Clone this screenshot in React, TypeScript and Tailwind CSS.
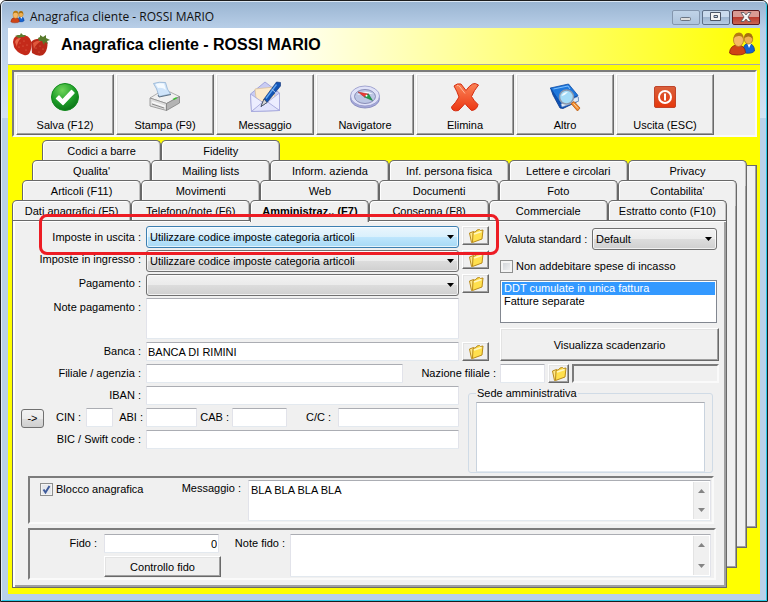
import React, { useState } from 'react';

const tabRows = [
    { className: 'ml-[30px] -mr-[30px]', tabs: ['Codici a barre', 'Fidelity'] },
    { className: 'ml-[20px] -mr-[20px]', tabs: ["Qualita'", 'Mailing lists', 'Inform. azienda', 'Inf. persona fisica', 'Lettere e circolari', 'Privacy'] },
    { className: 'ml-[10px] -mr-[10px]', tabs: ['Articoli (F11)', 'Movimenti', 'Web', 'Documenti', 'Foto', "Contabilita'"] },
];

const frontTabs = ['Dati anagrafici (F5)', 'Telefono/note (F6)', 'Amministraz.. (F7)', 'Consegna (F8)', 'Commerciale', 'Estratto conto (F10)'];

const raised = 'bg-[#f0f0f0] border border-t-white border-l-white border-r-[#696969] border-b-[#696969] shadow-[inset_-1px_-1px_0_#a0a0a0,inset_1px_1px_0_#e3e3e3]';
const sunken = 'border-2 border-t-[#7c7c7c] border-l-[#7c7c7c] border-r-[#fafafa] border-b-[#fafafa]';
const field = 'bg-white border border-t-[#abadb3] border-x-[#e2e3ea] border-b-[#e3e9ef] rounded-[1px] outline-none';

/* ---------- icons ---------- */

const SaveIcon = () => (
    <svg width="32" height="32" viewBox="0 0 32 32">
        <defs>
            <radialGradient id="okGreen" cx="0.4" cy="0.25" r="0.8">
                <stop offset="0" stopColor="#6fd45a" />
                <stop offset="0.55" stopColor="#1fa02a" />
                <stop offset="1" stopColor="#0a6e16" />
            </radialGradient>
        </defs>
        <circle cx="16" cy="16" r="13.5" fill="url(#okGreen)" stroke="#118a1c" />
        <path d="M7.500 17.500 L10 15 L13.500 19 L22.500 9.500 L25 12 L14 23.500 Z" fill="#fff" stroke="#fff" strokeWidth="1.4" strokeLinejoin="round" />
    </svg>
);

const PrintIcon = () => (
    <svg width="32" height="32" viewBox="0 0 32 32">
        <path d="M1 17 L10 11.5 L21 11 L30.5 15.5 L17.5 22.5Z" fill="#f0f0f0" stroke="#9a9a9a" strokeWidth=".8" />
        <path d="M4.500 2.500 Q10 .5 16.500 1.500 Q18 9 21.500 13 L10 15.500 Q8 7 4.500 2.500Z" fill="#cfe4fa" stroke="#8fb0d2" strokeWidth=".8" />
        <path d="M6.500 3 Q10 2 15 2.500 L17 9 Q13 6 9 7Z" fill="#f4faff" />
        <path d="M1 17 L17.500 22.500 L17.500 29.500 L1 25Z" fill="#dedede" stroke="#8a8a8a" strokeWidth=".8" />
        <path d="M17.500 22.500 L30.500 15.500 L30.500 22 L17.500 29.500Z" fill="#b4b4b4" stroke="#808080" strokeWidth=".8" />
        <path d="M3 21 L16 25.500" stroke="#f8f8f8" strokeWidth="1.4" />
        <path d="M3 23 L15 27" stroke="#767676" strokeWidth=".8" />
        <path d="M9 14 L10 16 L22 13.500" stroke="#5e7184" fill="none" />
        <path d="M23.500 18 L27 16.200 L28.500 17 L25 18.900Z" fill="#35c12c" />
    </svg>
);

const MessageIcon = () => (
    <svg width="32" height="32" viewBox="0 0 32 32">
        <path d="M1.500 13 L16 1 L30.500 12 L30.500 29.500 L2.500 30.500Z" fill="#c9ccf3" stroke="#9598d6" strokeWidth=".8" />
        <path d="M6 8 L25 6 L26 18 L16 24 L7 17Z" fill="#fdeacb" stroke="#d9bd94" strokeWidth=".7" />
        <path d="M1.500 13 L14 21.500 L2.500 30.500Z M30.500 12 L18 21.500 L30.500 29.500Z" fill="#ecedff" stroke="#a3a6da" strokeWidth=".8" />
        <path d="M2.500 30.500 L16 19 L30.500 29.500Z" fill="#e2e4fc" stroke="#a3a6da" strokeWidth=".8" />
        <path d="M31.500 1.500 L27.500 1 L15 18 L12 25.500 L18 21.500 L31.500 5Z" fill="#1354b4" stroke="#0b2f74" strokeWidth=".6" />
        <path d="M27.500 3.500 L17 17.500" stroke="#62a8f3" strokeWidth="1.300" />
        <path d="M15 18 L18 21.500 L12 25.500Z" fill="#d9d9d9" stroke="#33363e" strokeWidth=".6" />
        <path d="M22.500 8 L27 12" stroke="#a9c4ea" />
    </svg>
);

const CompassIcon = () => (
    <svg width="32" height="32" viewBox="0 0 32 32">
        <ellipse cx="16" cy="17.500" rx="14.500" ry="9.500" fill="#a6aada" stroke="#7c80b8" strokeWidth=".8" />
        <ellipse cx="16" cy="15" rx="14.500" ry="10" fill="#e0e2f8" stroke="#9194c6" strokeWidth=".8" />
        <ellipse cx="16" cy="15.500" rx="10.500" ry="7" fill="#bcc6e4" stroke="#777ba8" strokeWidth=".8" />
        <path d="M8 14 Q15 8 24 13 Q16 12 8 14Z" fill="#f4f9ff" />
        <path d="M9 11 L19.500 13 L15.500 16Z" fill="#ec3b34" stroke="#a02020" strokeWidth=".5" />
        <path d="M23.500 19.500 L19.500 13 L15.500 16Z" fill="#1fa048" stroke="#0d6530" strokeWidth=".5" />
        <circle cx="17.500" cy="14.800" r="1" fill="#fff" />
    </svg>
);

const DeleteIcon = () => (
    <svg width="32" height="32" viewBox="0 0 32 32">
        <defs>
            <linearGradient id="delRed" x1="0" y1="0" x2="0" y2="1">
                <stop offset="0" stopColor="#fa8457" />
                <stop offset="1" stopColor="#ec3612" />
            </linearGradient>
        </defs>
        <path
            d="M5 5 Q8 2 12 3 L17 9.500 Q20 5 23.500 3 Q26 1.500 29.500 4 Q25 9.500 22.500 15.500 Q25 20 29 23.500 Q28 29 22.500 29.500 Q19 26.500 16 22.500 Q13 26 9.500 29.500 Q3 31 2.500 26 Q7 21.500 10 16 Q8 10 5 5Z"
            fill="url(#delRed)"
            stroke="#d42c10"
            strokeLinejoin="round"
        />
        <path d="M8 4.500 Q9.500 4 11 6 L16 12.500" stroke="#ffb99b" fill="none" />
    </svg>
);

const BookIcon = () => (
    <svg width="32" height="32" viewBox="0 0 32 32">
        <path d="M1.500 7 L4 14 L11 27 L14 27.500 L29.500 20 L29 16Z" fill="#0e51b4" stroke="#0a3a8a" strokeWidth=".8" />
        <path d="M12 23 L29 15.500 L29.500 20 L13 26Z" fill="#dfeaf7" stroke="#7b9cc8" strokeWidth=".6" />
        <path d="M1.500 7 L19.500 3 L29 14.500 L11.500 22Z" fill="#1f78dc" stroke="#0d4ba6" strokeWidth=".8" />
        <path d="M4.500 8 L19 5 L21 8" stroke="#7fc0ff" fill="none" />
        <path d="M22 22.500 L25 20.500 L31 27 L28.500 30Z" fill="#f18a2b" stroke="#b95a12" strokeWidth=".8" />
        <path d="M24.500 22.500 L29 27.500" stroke="#ffd9a6" />
        <circle cx="17.500" cy="16" r="7" fill="#a4dcf8" stroke="#8c98ac" strokeWidth="1.500" />
        <path d="M12.500 15 Q14 11 19 11 Q16 14.500 12.500 15Z" fill="#f2fbff" />
    </svg>
);

const ExitIcon = () => (
    <svg width="32" height="32" viewBox="0 0 32 32">
        <defs>
            <linearGradient id="exitRed" x1="0" y1="0" x2="0" y2="1">
                <stop offset="0" stopColor="#d9613c" />
                <stop offset="1" stopColor="#e6370b" />
            </linearGradient>
        </defs>
        <rect x="5.500" y="5.500" width="21" height="21" rx="1.500" fill="url(#exitRed)" stroke="#c0442a" />
        <circle cx="16" cy="16" r="6" fill="none" stroke="#fff" strokeWidth="2" />
        <rect x="15" y="12.500" width="2" height="7" fill="#fff" />
    </svg>
);

const FolderIcon = () => (
    <svg width="16" height="16" viewBox="0 0 16 16">
        <path d="M1.500 5 L5.500 3.500 L6.500 12.500 L3.500 14.500Z" fill="#ffe98a" stroke="#b98a1a" />
        <path d="M5 4.500 L8 3.500 L9 2 L11.500 1.500 L12.500 2.500 L15 2 L14 11 L4.500 14.500Z" fill="#ffe04e" stroke="#b98a1a" />
        <path d="M6 6 L13.500 3.500" stroke="#fff7c4" strokeWidth="1.400" />
    </svg>
);

const Strawberries = () => (
    <svg width="40" height="26" viewBox="0 0 40 26">
        <path d="M19 10 Q23 6 30 7 Q36 7 35.500 13 Q35 20 31 23 Q26 25 20 21Z" fill="#b82818" />
        <path d="M21 11 Q25 8 29 9 Q24 12 22 17Z" fill="#e0583c" />
        <path d="M26 6 L28 5 L28 3 L31 5 L34 3 L34 6 L38 8 L35 9 L36 12 L33 10 L32 13 L30 9 L27 9Z" fill="#587a2c" />
        <path d="M1 10 Q1 4 8 3 Q17 2 19 9 Q20 16 18 20 Q16 24 12 23 Q4 20 2 15Z" fill="#c42a1a" />
        <path d="M3 10 Q4 6 9 6 Q5 10 5 15Z" fill="#ea6a4c" />
        <path d="M3 4 L6 3 L8 3 L9 1 L11 3 L14 3 L12 5 L9 5 L7 6Z" fill="#5d7c30" />
        <g fill="#e5765c">
            <circle cx="8" cy="11" r=".6" />
            <circle cx="12" cy="9" r=".6" />
            <circle cx="15" cy="13" r=".6" />
            <circle cx="7" cy="15" r=".6" />
            <circle cx="11" cy="14" r=".6" />
            <circle cx="14" cy="18" r=".6" />
            <circle cx="24" cy="16" r=".6" />
            <circle cx="28" cy="14" r=".6" />
            <circle cx="31" cy="17" r=".6" />
            <circle cx="27" cy="20" r=".6" />
        </g>
    </svg>
);

const UsersIcon = ({ size = 28 }: { size?: number }) => (
    <svg width={size} height={size} viewBox="0 0 28 28">
        <path d="M15 21 Q15 13 20 12 Q26.500 13 26.500 20 Q24 23 17 22Z" fill="#1763cf" stroke="#0d4396" strokeWidth=".8" />
        <path d="M19 12 L21 17 L23.500 12Z" fill="#fff" />
        <ellipse cx="20.500" cy="8" rx="4.200" ry="5" fill="#f0b050" stroke="#b07a1d" strokeWidth=".8" />
        <path d="M16 7 Q16 2 20.500 2 Q25 2 24.500 8 Q23 5 20 5.500Z" fill="#a8700f" />
        <path d="M1.500 22 Q2 14.500 9 14 Q17 14 17.500 21.500 Q16 24 9 24 Q3 24 1.500 22Z" fill="#cf4416" stroke="#8e2408" strokeWidth=".8" />
        <ellipse cx="10.500" cy="9" rx="5" ry="6.500" fill="#f6b866" stroke="#b57a23" strokeWidth=".8" />
        <path d="M5.500 7.500 Q6 1.500 11 1.500 Q16 2 15.500 8 Q14 4.500 10.500 5 Q7 5 5.500 7.500Z" fill="#b57a14" />
    </svg>
);

const toolbar = [
    { label: 'Salva (F12)', icon: <SaveIcon /> },
    { label: 'Stampa (F9)', icon: <PrintIcon /> },
    { label: 'Messaggio', icon: <MessageIcon /> },
    { label: 'Navigatore', icon: <CompassIcon /> },
    { label: 'Elimina', icon: <DeleteIcon /> },
    { label: 'Altro', icon: <BookIcon /> },
    { label: 'Uscita (ESC)', icon: <ExitIcon /> },
];

/* ---------- small controls ---------- */

const FolderButton = ({ label, className = 'w-[27px]' }: { label: string; className?: string }) => (
    <button aria-label={label} className={`${raised} ${className} h-[19px] shrink-0 flex items-center justify-center`}>
        <FolderIcon />
    </button>
);

interface ComboProps {
    id: string;
    options: string[];
    hot?: boolean;
    className?: string;
}

const Combo = ({ id, options, hot, className = '' }: ComboProps) => (
    <div className={`relative ${className}`}>
        <select
            id={id}
            className={`block w-full h-[22px] appearance-none rounded-[3px] border pl-[3px] pr-5 outline-none shadow-[inset_0_0_0_1px_rgba(255,255,255,0.7)] ${
                hot
                    ? 'border-[#3c7fb1] bg-[linear-gradient(#eaf6fd,#d9f0fc_50%,#bee6fd_50%,#a7d9f5)]'
                    : 'border-[#707070] bg-[linear-gradient(#f2f2f2,#ebebeb_50%,#dddddd_50%,#cfcfcf)]'
            }`}
        >
            {options.map((o) => <option key={o}>{o}</option>)}
        </select>
        <svg className="absolute right-[5px] top-[9px] pointer-events-none" width="7" height="4" viewBox="0 0 7 4">
            <path d="M0 0H7L3.500 4Z" fill="#000" />
        </svg>
    </div>
);

interface RowProps {
    id: string;
    label: string;
    center?: boolean;
    children: React.ReactNode;
}

const Row = ({ id, label, center, children }: RowProps) => (
    <div className="flex">
        <label htmlFor={id} className={`w-[128px] mr-[5px] shrink-0 text-right leading-[18px] ${center ? 'self-center' : ''}`}>{label}</label>
        {children}
    </div>
);

const ScrollArea = ({ id, value, className }: { id: string; value?: string; className: string }) => (
    <div className={`${field} ${className} flex-1 flex p-px`}>
        <textarea id={id} defaultValue={value} className="flex-1 min-w-0 resize-none outline-none px-px py-px leading-[14px]" />
        <div className="w-4 shrink-0 bg-[#f0f0f0] border-l border-[#e3e3e3] flex flex-col justify-between items-center py-[7px]">
            <svg width="7" height="4" viewBox="0 0 7 4"><path d="M0 4H7L3.500 0Z" fill="#848484" /></svg>
            <svg width="7" height="4" viewBox="0 0 7 4"><path d="M0 0H7L3.500 4Z" fill="#848484" /></svg>
        </div>
    </div>
);

const tabBase = 'border border-b-0 border-[#696969] rounded-t-[5px] bg-[#f0f0f0] shadow-[inset_1px_1px_0_#ffffff,inset_-1px_0_0_#c0c0c0] whitespace-nowrap text-center leading-[20px]';

/* ---------- page ---------- */

export default function App() {
    const [active, setActive] = useState('Amministraz.. (F7)');

    return (
        <div className="border border-[#1c1c1c] rounded-t-[6px] text-[11px] leading-[14px] text-black font-['Liberation_Sans',Arial,sans-serif] bg-[linear-gradient(#99b4d1,#b9cfe8_28px,#d3e2f3_117px,#b9d1ea_117px)]">
            <div className="border border-t-[#dbe7f3] border-l-[#e6eff8] border-r-[#2cc9e8] border-b-[#2cc9e8] rounded-t-[5px] px-[6px] pb-[6px]">
                <div className="h-[26px] flex items-center">
                    <div className="ml-[2px] mt-[4px]"><UsersIcon size={15} /></div>
                    <span className="ml-[5px] mt-[4px] flex-1 text-[12px] font-['Open_Sans',sans-serif] text-[#111]">Anagrafica cliente - ROSSI MARIO</span>
                    <div className="flex gap-[2px] mt-[4px]">
                        <button aria-label="Riduci a icona" className="w-7 h-[15px] rounded-[2px] border border-[#8496ae] bg-[linear-gradient(#c0d3e8,#aec4dd)] flex items-center justify-center">
                            <svg width="12" height="10" viewBox="0 0 12 10"><rect x=".5" y="5.500" width="10" height="3" rx="1" fill="#ddd" stroke="#6b7482" /></svg>
                        </button>
                        <button aria-label="Ingrandisci" className="w-7 h-[15px] rounded-[2px] border border-[#5e7089] bg-[linear-gradient(#c9daed_50%,#9fb6d1_50%,#b5cbe3)] flex items-center justify-center">
                            <svg width="12" height="10" viewBox="0 0 12 10"><path d="M.5 .5H10.500V8.500H.5Z M4 3.500H7.500V5.500H4Z" fill="#f4f4f4" stroke="#4c5566" fillRule="evenodd" /></svg>
                        </button>
                        <button aria-label="Chiudi" className="w-7 h-[15px] rounded-[2px] border border-[#5c1a1f] bg-[linear-gradient(#d99a93_45%,#b8382c_45%,#c96553)] flex items-center justify-center">
                            <svg width="12" height="10" viewBox="0 0 12 10"><path d="M1 .5H4L6 3L8 .5H11L8 5L11 9.500H8L6 7L4 9.500H1L4 5Z" fill="#f6f6f6" stroke="#53535c" strokeWidth=".8" /></svg>
                        </button>
                    </div>
                </div>

                <div className="bg-[#ffff00] pb-[6px]">
                    <header className="h-[37px] flex items-center border-b border-[#a8a8a8] bg-[linear-gradient(90deg,#ffffff_34%,#ffff00_100%)] pl-[4px] pr-[4px] pb-[2px]">
                        <Strawberries />
                        <h1 className="ml-[9px] mb-px flex-1 text-[16px] leading-[20px] font-bold">Anagrafica cliente - ROSSI MARIO</h1>
                        <UsersIcon />
                    </header>

                    <div className="pl-[4px] pr-[3px]">
                        <div className={`${sunken} mt-[5px] bg-[#f0f0f0] pt-[2px] pl-[2px] flex gap-[2px]`}>
                            {toolbar.map((item) => (
                                <button key={item.label} className={`${raised} w-[98px] h-[61px] flex flex-col items-center pt-[6px]`}>
                                    {item.icon}
                                    <span className="mt-[5px]">{item.label}</span>
                                </button>
                            ))}
                        </div>

                        <div className="flex mt-[3px]">
                            <div className="flex-1 min-w-0 relative z-10">
                                {tabRows.map((row) => (
                                    <div key={row.tabs[0]} className={`grid grid-cols-6 -mb-[6px] ${row.className}`}>
                                        {row.tabs.map((t) => (
                                            <button key={t} onClick={() => setActive(t)} className={`${tabBase} h-[26px] pb-[6px]`}>{t}</button>
                                        ))}
                                    </div>
                                ))}
                                <div className="grid grid-cols-6 relative z-10">
                                    {frontTabs.map((t) => (
                                        <button
                                            key={t}
                                            onClick={() => setActive(t)}
                                            className={`${tabBase} ${t === active ? 'h-[22px] -mb-[2px] pb-[2px] font-bold' : 'h-[20px]'}`}
                                        >
                                            {t}
                                        </button>
                                    ))}
                                </div>

                                <main className="relative bg-[#f0f0f0] border border-[#696969] shadow-[inset_2px_1px_0_#ffffff,inset_-2px_-2px_0_#a0a0a0] pt-[5px] pb-[7px]">
                                    <div className="flex pr-[7px] gap-[11px]">
                                        <div className="flex-1 min-w-0">
                                            <div className="relative z-20 mb-[2px]">
                                                <Row id="uscita" label="Imposte in uscita :" center>
                                                    <Combo id="uscita" hot options={['Utilizzare codice imposte categoria articoli']} className="flex-1 mr-[3px]" />
                                                    <FolderButton label="Sfoglia imposte in uscita" />
                                                </Row>
                                                {/* red highlight around the first row */}
                                                <div className="absolute left-[26px] -right-[10px] -top-[12px] -bottom-[7px] border-3 border-[#ed1c24] rounded-[8px] pointer-events-none" />
                                            </div>
                                            <div className="mb-[2px]">
                                                <Row id="ingresso" label="Imposte in ingresso :">
                                                    <Combo id="ingresso" options={['Utilizzare codice imposte categoria articoli']} className="flex-1 mr-[3px]" />
                                                    <FolderButton label="Sfoglia imposte in ingresso" />
                                                </Row>
                                            </div>
                                            <div className="mb-[2px]">
                                                <Row id="pagamento" label="Pagamento :">
                                                    <Combo id="pagamento" options={['']} className="flex-1 mr-[3px]" />
                                                    <FolderButton label="Sfoglia pagamenti" />
                                                </Row>
                                            </div>
                                            <div className="mb-[3px]">
                                                <Row id="notePag" label="Note pagamento :">
                                                    <textarea id="notePag" className={`${field} flex-1 min-w-0 h-[41px] mr-[30px] resize-none`} />
                                                </Row>
                                            </div>
                                            <Row id="banca" label="Banca :">
                                                <input id="banca" defaultValue="BANCA DI RIMINI" className={`${field} flex-1 min-w-0 h-[19px] mr-[3px] px-px`} />
                                                <FolderButton label="Sfoglia banche" />
                                            </Row>
                                        </div>

                                        <div className="w-[219px] shrink-0">
                                            <div className="flex items-center justify-between pt-[2px] pl-[5px] pr-[2px]">
                                                <label htmlFor="valuta">Valuta standard :</label>
                                                <Combo id="valuta" options={['Default']} className="w-[125px]" />
                                            </div>
                                            <label className="flex items-center gap-[3px] mt-[9px]">
                                                <input type="checkbox" className="appearance-none size-[13px] border border-[#8e8f8f] bg-[linear-gradient(135deg,#cbcfd5,#f6f6f6)] shadow-[inset_0_0_0_2px_#f4f4f4]" />
                                                Non addebitare spese di incasso
                                            </label>
                                            <select
                                                aria-label="Tipo fatturazione"
                                                size={3}
                                                defaultValue="cumulate"
                                                className="block w-[217px] h-[43px] mt-[7px] p-px bg-white border border-[#828790] rounded-none outline-none overflow-hidden"
                                            >
                                                <option value="cumulate" className="h-[13px] min-h-0 px-[2px] py-0 leading-[13px] checked:bg-[linear-gradient(#3399ff,#3399ff)] checked:text-white">DDT cumulate in unica fattura</option>
                                                <option value="separate" className="h-[13px] min-h-0 px-[2px] py-0 leading-[13px] checked:bg-[linear-gradient(#3399ff,#3399ff)] checked:text-white">Fatture separate</option>
                                            </select>
                                            <button className={`${raised} block w-full h-[33px] mt-[5px]`}>Visualizza scadenzario</button>
                                        </div>
                                    </div>

                                    <div className="mt-[3px] pr-[7px] flex">
                                        <div className="flex-1 min-w-0">
                                            <Row id="filiale" label="Filiale / agenzia :">
                                                <input id="filiale" className={`${field} flex-1 min-w-0 h-[19px] px-px`} />
                                            </Row>
                                        </div>
                                        <label htmlFor="nazione" className="w-[93px] text-right leading-[18px] mr-[4px]">Nazione filiale :</label>
                                        <input id="nazione" className={`${field} w-[45px] h-[19px] px-px mr-[3px]`} />
                                        <FolderButton label="Sfoglia nazioni" className="w-[21px]" />
                                        <input aria-label="Descrizione nazione" readOnly className={`${sunken} w-[147px] h-[19px] ml-[3px] bg-[#f0f0f0] outline-none`} />
                                    </div>

                                    <div className="mt-[3px] pr-[13px] flex gap-[9px]">
                                        <div className="flex-1 min-w-0 flex flex-col gap-[3px]">
                                            <Row id="iban" label="IBAN :">
                                                <input id="iban" className={`${field} flex-1 min-w-0 h-[19px] px-px`} />
                                            </Row>
                                            <div className="flex h-[19px] leading-[18px]">
                                                <button aria-label="Calcola" className="ml-[8px] mt-px w-[23px] h-[19px] rounded-[3px] border border-[#707070] bg-[linear-gradient(#f2f2f2,#ebebeb_50%,#dddddd_50%,#cfcfcf)] leading-none">-&gt;</button>
                                                <label htmlFor="cin" className="w-[37px] mr-[5px] text-right">CIN :</label>
                                                <input id="cin" className={`${field} w-[27px]`} />
                                                <label htmlFor="abi" className="w-[30px] mr-[3px] text-right">ABI :</label>
                                                <input id="abi" className={`${field} w-[51px]`} />
                                                <label htmlFor="cab" className="w-[32px] mr-[3px] text-right">CAB :</label>
                                                <input id="cab" className={`${field} w-[55px]`} />
                                                <label htmlFor="cc" className="w-[44px] mr-[7px] text-right">C/C :</label>
                                                <input id="cc" className={`${field} flex-1 min-w-0`} />
                                            </div>
                                            <Row id="bic" label="BIC / Swift code :">
                                                <input id="bic" className={`${field} flex-1 min-w-0 h-[19px] px-px`} />
                                            </Row>
                                        </div>
                                        <fieldset className="w-[245px] shrink-0 border border-[#d0dbe6] rounded-[3px] px-[7px]">
                                            <legend className="px-px leading-[14px]">Sede amministrativa</legend>
                                            <textarea aria-label="Sede amministrativa" className="block w-full h-[70px] mt-[2px] bg-white border border-t-[#abadb3] border-x-[#c9d3de] border-b-[#e3e9ef] resize-none outline-none" />
                                        </fieldset>
                                    </div>

                                    <div className={`${sunken} mt-[3px] ml-[15px] mr-[12px] h-[48px] flex pt-[2px] pl-[10px] pr-px`}>
                                        <label className="flex items-center gap-[3px] h-[16px] mt-px">
                                            <span className="relative block size-[13px]">
                                                <input type="checkbox" defaultChecked className="peer block appearance-none size-[13px] border border-[#8e8f8f] bg-[#e6e8ec] shadow-[inset_0_0_0_1px_#f4f4f4]" />
                                                <svg className="absolute inset-0 pointer-events-none invisible peer-checked:visible" width="13" height="13" viewBox="0 0 13 13">
                                                    <path d="M3.500 6.500L5.500 9.500L9.500 3" fill="none" stroke="#3f5b9b" strokeWidth="2" />
                                                </svg>
                                            </span>
                                            Blocco anagrafica
                                        </label>
                                        <label htmlFor="messaggio" className="ml-auto w-[90px] mr-[7px] text-right leading-[16px]">Messaggio :</label>
                                        <div className="w-[463px] flex">
                                            <ScrollArea id="messaggio" value="BLA BLA BLA BLA" className="h-[41px]" />
                                        </div>
                                    </div>

                                    <div className={`${sunken} mt-[4px] ml-[15px] mr-[10px] h-[52px] flex pt-[4px] pr-[3px]`}>
                                        <label htmlFor="fido" className="w-[67px] mr-[7px] text-right leading-[18px]">Fido :</label>
                                        <div className="w-[117px]">
                                            <input id="fido" defaultValue="0" className={`${field} block w-[115px] h-[19px] px-px text-right`} />
                                            <button className={`${raised} w-full h-[21px] mt-[3px]`}>Controllo fido</button>
                                        </div>
                                        <label htmlFor="noteFido" className="w-[64px] mr-[5px] text-right leading-[18px]">Note fido :</label>
                                        <ScrollArea id="noteFido" className="h-[43px]" />
                                    </div>
                                </main>
                            </div>

                            {/* edges of the tab pages stacked behind */}
                            <div className="w-[10px] mt-[50px] mb-[20px] bg-[#f0f0f0] border-r border-b border-[#696969] shadow-[inset_-1px_-1px_0_#a0a0a0]" />
                            <div className="w-[10px] mt-[30px] mb-[40px] bg-[#f0f0f0] border-r border-b border-[#696969] shadow-[inset_-1px_-1px_0_#a0a0a0]" />
                            <div className="w-[10px] mt-[25px] mb-[60px] bg-[#f0f0f0] border-t border-r border-b border-[#696969] shadow-[inset_-1px_-1px_0_#a0a0a0]" />
                        </div>
                    </div>
                </div>
            </div>
        </div>
    );
}
